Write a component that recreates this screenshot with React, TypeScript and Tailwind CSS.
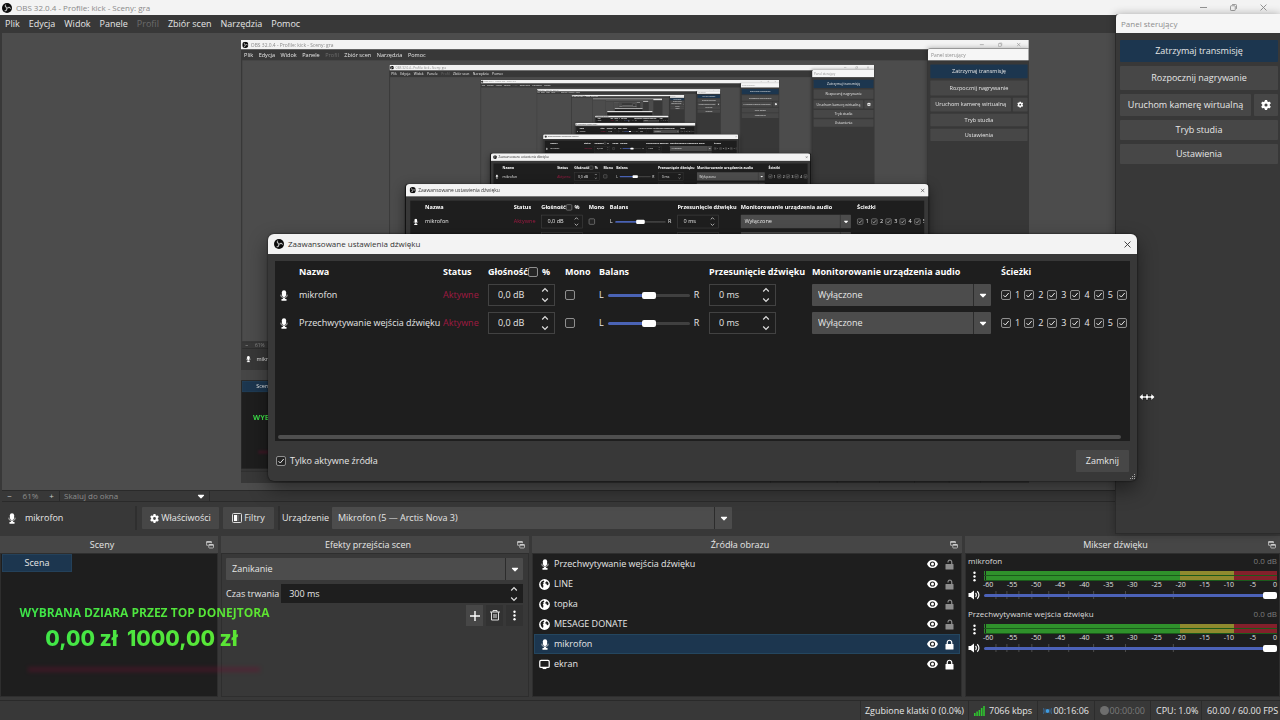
import type { ReactNode } from 'react';
import { FaCaretDown, FaGear } from 'react-icons/fa6';

// below this depth the captured window is too small to hold any text
const MAX_TEXT_DEPTH = 5;
const MAX_DEPTH = 9;

// the dialog grows while its edge is dragged, so older frames show it narrower
const dialogWidths = ['w-[869px]', 'w-[849px]', 'w-[843px]', 'w-[837px]', 'w-[837px]', 'w-[832px]'];

const menu = ['Plik', 'Edycja', 'Widok', 'Panele', 'Profil', 'Zbiór scen', 'Narzędzia', 'Pomoc'];

const sources = [
  { name: 'Przechwytywanie wejścia dźwięku', type: 'mic', locked: false, selected: false },
  { name: 'LINE', type: 'web', locked: false, selected: false },
  { name: 'topka', type: 'web', locked: false, selected: false },
  { name: 'MESAGE DONATE', type: 'web', locked: false, selected: false },
  { name: 'mikrofon', type: 'mic', locked: true, selected: true },
  { name: 'ekran', type: 'screen', locked: true, selected: false },
];

const audio = ['mikrofon', 'Przechwytywanie wejścia dźwięku'];
const scale = [-60, -55, -50, -45, -40, -35, -30, -25, -20, -15, -10, -5, 0];
const volumeTicks = [12, 23, 35, 48, 65, 85, 110, 142, 190];

/* ── ICONS ── */

function ObsLogo() {
  return (
    <svg viewBox="0 0 24 24" className="h-[10px] w-[10px] shrink-0" aria-hidden="true">
      <circle cx="12" cy="12" r="12" fill="#0b0b0b" />
      {[0, 120, 240].map((angle) => (
        <path key={angle} transform={`rotate(${angle} 12 12)`} d="M9 3.500c-2.600 1.800-2.600 5.600.3 7.100 1.500.8 3 .6 4-.2-1.900.1-3.600-.9-4.200-2.500C8.600 6.500 8.600 4.800 9 3.500z" fill="#d8d8d8" stroke="#d8d8d8" strokeWidth=".8" />
      ))}
    </svg>
  );
}

function MicIcon() {
  return (
    <svg viewBox="0 0 12 14" className="h-[11px] w-[10px] shrink-0" aria-hidden="true">
      <rect x="3.300" y="0.300" width="5.400" height="8.800" rx="2.700" fill="#fff" />
      <path d="M2 6c0 2.800 1.600 4.200 4 4.200S10 8.800 10 6" fill="none" stroke="#d0d0d0" strokeWidth="1.100" />
      <path d="M4.800 10h2.400v1.500h2v2.100H2.800v-2.100h2z" fill="#fff" />
    </svg>
  );
}

function GlobeIcon() {
  return (
    <svg viewBox="0 0 22 22" className="h-[11px] w-[11px] shrink-0" aria-hidden="true">
      <circle cx="11" cy="11" r="10.800" fill="#fff" />
      <path d="M3 8.500C4.500 5 7 3.500 10 3l.5 2.500L8 7.500l1.500 1.500-2 2.500 1.500 2-1 4.500C5 16.500 3 13 3 8.500z" fill="#1e1e1e" />
      <path d="M13 6.500l2.500-2c2 1 3.300 2.800 3.800 5l-1.300 3-2.500-.5-.5-2.500-2.500-.5z" fill="#1e1e1e" />
    </svg>
  );
}

function ScreenIcon() {
  return (
    <svg viewBox="0 0 14 14" className="h-[11px] w-[11px] shrink-0" aria-hidden="true">
      <rect x="1" y="1.800" width="12" height="9" rx="1.600" fill="none" stroke="#fff" strokeWidth="1.600" />
      <path d="M4.600 11h4.800v1.800H4.600z" fill="#fff" />
    </svg>
  );
}

function EyeIcon() {
  return (
    <svg viewBox="0 0 22 16" className="h-[8px] w-[11px]" aria-hidden="true">
      <path d="M11 0C5.800 0 1.600 3.300 0 8c1.600 4.700 5.800 8 11 8s9.400-3.300 11-8C20.400 3.300 16.200 0 11 0z" fill="#fff" />
      <circle cx="11" cy="8" r="5.200" fill="#1e1e1e" />
      <circle cx="11" cy="8" r="3" fill="#fff" />
    </svg>
  );
}

function LockIcon({ locked }: { locked: boolean }) {
  return (
    <svg viewBox="0 0 18 22" className="h-[11px] w-[9px]" aria-hidden="true">
      <rect x="1" y="10" width="16" height="11" rx="1" fill={locked ? '#fff' : '#8c8c8c'} />
      <path d={locked ? 'M4.500 11V7a4.500 4.500 0 0 1 9 0v4' : 'M13.500 11V5.500a3.800 3.800 0 0 0-7.500 0V7'} fill="none" stroke={locked ? '#fff' : '#8c8c8c'} strokeWidth="2.400" />
    </svg>
  );
}

function FloatIcon() {
  return (
    <svg viewBox="0 0 16 16" className="h-[8px] w-[8px]" aria-hidden="true">
      <path d="M4 8.500H1.200V1.500h9.500v3" fill="none" stroke="#ccc" strokeWidth="1.600" />
      <path d="M1 2h10" stroke="#ddd" strokeWidth="2.400" />
      <rect x="5.500" y="7" width="9.500" height="7" rx="1.400" fill="none" stroke="#ccc" strokeWidth="1.600" />
      <path d="M5.500 8h9.500" stroke="#ddd" strokeWidth="2.400" />
    </svg>
  );
}

function CloseIcon() {
  return (
    <svg viewBox="0 0 10 10" className="h-[7px] w-[7px]" aria-hidden="true">
      <path d="M.8.8l8.400 8.400M9.200.8L.8 9.200" stroke="currentColor" strokeWidth="1.300" />
    </svg>
  );
}

function DotsIcon() {
  return (
    <svg viewBox="0 0 4 14" className="h-[11px] w-[3px]" aria-hidden="true">
      <circle cx="2" cy="2" r="1.600" fill="#fff" />
      <circle cx="2" cy="7" r="1.600" fill="#fff" />
      <circle cx="2" cy="12" r="1.600" fill="#fff" />
    </svg>
  );
}

function SpeakerIcon() {
  return (
    <svg viewBox="0 0 24 20" className="h-[10px] w-[12px]" aria-hidden="true">
      <path d="M1 6h4.500L12 1v18l-6.500-5H1z" fill="#fff" />
      <path d="M15 6c2.200 2 2.200 6 0 8M18.500 2.500c4.500 4 4.500 11 0 15" fill="none" stroke="#fff" strokeWidth="2.400" />
    </svg>
  );
}

function SourceIcon({ type }: { type: string }) {
  if (type === 'web') return <GlobeIcon />;
  if (type === 'screen') return <ScreenIcon />;
  return <MicIcon />;
}

/* ── CONTROLS ── */

function Check({ checked, label, text }: { checked?: boolean; label: string; text?: ReactNode }) {
  return (
    <label className="flex items-center gap-1 whitespace-nowrap">
      <span className="relative block h-[10px] w-[10px] shrink-0">
        <input type="checkbox" defaultChecked={checked} aria-label={label} className="peer block h-[10px] w-[10px] appearance-none rounded-[2px] border border-[#8f8f8f] bg-[#252525]" />
        <svg viewBox="0 0 10 10" className="pointer-events-none absolute inset-0 hidden h-[10px] w-[10px] peer-checked:block" aria-hidden="true">
          <path d="M2.500 5.200l1.800 1.800 3.400-4" fill="none" stroke="#e8e8e8" strokeWidth="1" />
        </svg>
      </span>
      {text}
    </label>
  );
}

function Arrows() {
  return (
    <svg viewBox="0 0 8 16" className="h-[16px] w-[8px] shrink-0" aria-hidden="true">
      <path d="M1.200 4.500L4 1.700l2.800 2.800M1.200 11.500L4 14.300l2.800-2.800" fill="none" stroke="#e0e0e0" strokeWidth="1.200" />
    </svg>
  );
}

function Spin({ value, label }: { value: string; label: string }) {
  return (
    <div className="flex h-[22px] w-[67px] items-center border border-[#424242] pr-[5px] pl-[9px]">
      <input type="text" defaultValue={value} aria-label={label} className="w-full min-w-0 bg-transparent outline-none" />
      <Arrows />
    </div>
  );
}

function Select({ value, label }: { value: string; label: string }) {
  return (
    <div className="relative h-[22px] w-full min-w-0">
      <select aria-label={label} className="h-full w-full appearance-none rounded-[1px] bg-[#4c4c4c] px-[6px] outline-none">
        <option>{value}</option>
      </select>
      <span className="pointer-events-none absolute inset-y-0 right-0 flex w-[18px] items-center justify-center border-l border-[#2c2c2c]">
        <FaCaretDown className="h-[10px] w-[10px] text-white" />
      </span>
    </div>
  );
}

/* ── WINDOWS ── */

function ControlPanel() {
  const button = 'flex items-center justify-center rounded-[1px] bg-[#474747] hover:bg-[#555]';
  return (
    <aside className="absolute top-[14px] right-0 flex h-[520px] w-[165px] flex-col overflow-hidden rounded-tl-[4px] border-b border-l border-[#2b2b2b] bg-[#383838] shadow-[0_0_8px_rgba(0,0,0,.3)]">
      <h2 className="flex h-[19px] shrink-0 items-center bg-[#f6f6f6] px-[5px] text-[8px] text-[#8d8d8d]">Panel sterujący</h2>
      <div className="flex flex-col gap-[4px] py-[7px] pr-[2px] pl-[4px]">
        <button className="h-[22px] rounded-[1px] bg-[#1c364f]">Zatrzymaj transmisję</button>
        <button className={`${button} h-[24px]`}>Rozpocznij nagrywanie</button>
        <div className="flex gap-[3px]">
          <button className={`${button} h-[22px] flex-1`}>Uruchom kamerę wirtualną</button>
          <button className={`${button} h-[22px] w-[24px]`} aria-label="Konfiguracja kamery">
            <FaGear className="h-[10px] w-[10px] text-white" />
          </button>
        </div>
        <button className={`${button} h-[20px]`}>Tryb studia</button>
        <button className={`${button} h-[20px]`}>Ustawienia</button>
      </div>
    </aside>
  );
}

function AudioDialog({ depth }: { depth: number }) {
  return (
    <section role="dialog" aria-label="Zaawansowane ustawienia dźwięku" className={`absolute top-[234px] left-[268px] flex h-[247px] flex-col overflow-hidden rounded-[6px] bg-[#383838] shadow-[0_8px_20px_rgba(0,0,0,.45),0_0_2px_rgba(0,0,0,.8)] ${dialogWidths[depth]}`}>
      <header className="flex h-[20px] shrink-0 items-center gap-[4px] bg-[#f3f3f3] pr-[6px] pl-[6px] text-[8px] text-[#333]">
        <ObsLogo />
        <span className="flex-1">Zaawansowane ustawienia dźwięku</span>
        <button aria-label="Zamknij okno"><CloseIcon /></button>
      </header>

      <div className="mx-[7px] mt-[7px] flex h-[180px] flex-col overflow-hidden bg-[#1e1e1e]">
        <table className="w-[875px] table-fixed text-left">
          <colgroup>
            <col className="w-[24px]" />
            <col className="w-[144px]" />
            <col className="w-[45px]" />
            <col className="w-[77px]" />
            <col className="w-[34px]" />
            <col className="w-[110px]" />
            <col className="w-[103px]" />
            <col className="w-[189px]" />
            <col />
          </colgroup>
          <thead>
            <tr className="h-[20px] whitespace-nowrap text-white *:pt-[2px]">
              <th />
              <th>Nazwa</th>
              <th>Status</th>
              <th>
                <div className="flex items-center">
                  Głośność
                  <Check label="Głośność w procentach" text="%" />
                </div>
              </th>
              <th>Mono</th>
              <th>Balans</th>
              <th>Przesunięcie dźwięku</th>
              <th>Monitorowanie urządzenia audio</th>
              <th>Ścieżki</th>
            </tr>
          </thead>
          <tbody>
            {audio.map((name) => (
              <tr key={name} className="h-[28px] whitespace-nowrap">
                <td className="pl-[4px]"><MicIcon /></td>
                <td>{name}</td>
                <td className="text-[#a01a42]">Aktywne</td>
                <td><Spin value="0,0 dB" label={`Głośność: ${name}`} /></td>
                <td><Check label={`Mono: ${name}`} /></td>
                <td>
                  <label className="flex items-center gap-[4px]">
                    L
                    <input
                      type="range"
                      defaultValue={50}
                      aria-label={`Balans: ${name}`}
                      className="h-[3px] w-[82px] appearance-none rounded-full bg-[linear-gradient(90deg,#4a63b5_50%,#404040_50%)] [&::-webkit-slider-thumb]:h-[7px] [&::-webkit-slider-thumb]:w-[14px] [&::-webkit-slider-thumb]:appearance-none [&::-webkit-slider-thumb]:rounded-[2px] [&::-webkit-slider-thumb]:bg-white"
                    />
                    R
                  </label>
                </td>
                <td><Spin value="0 ms" label={`Przesunięcie: ${name}`} /></td>
                <td className="pr-[10px]"><Select value="Wyłączone" label={`Monitorowanie: ${name}`} /></td>
                <td>
                  <div className="flex gap-[4px]">
                    {[1, 2, 3, 4, 5].map((n) => (
                      <Check key={n} checked label={`Ścieżka ${n}: ${name}`} text={n} />
                    ))}
                    <Check checked label={`Ścieżka 6: ${name}`} />
                  </div>
                </td>
              </tr>
            ))}
          </tbody>
        </table>
        <div className="mt-auto mr-[9px] mb-[2px] ml-[3px] h-[4px] shrink-0 rounded-full bg-[#4f4f4f]" />
      </div>

      <footer className="flex flex-1 items-center justify-between pr-[8px] pl-[8px]">
        <Check checked label="Tylko aktywne źródła" text="Tylko aktywne źródła" />
        <button className="h-[22px] w-[53px] rounded-[1px] bg-[#474747]">Zamknij</button>
      </footer>
      <svg viewBox="0 0 6 6" className="absolute right-[1px] bottom-[1px] h-[6px] w-[6px]" aria-hidden="true">
        <path d="M4 0h1v1H4zM2 2h1v1H2zM4 2h1v1H4zM0 4h1v1H0zM2 4h1v1H2zM4 4h1v1H4z" fill="#aaa" />
      </svg>
    </section>
  );
}

/* ── DOCKS ── */

function Dock({ title, className = '', children }: { title: string; className?: string; children: ReactNode }) {
  return (
    <section className="flex min-w-0 flex-col">
      <header className="flex h-[17px] shrink-0 items-center bg-[#464646] px-[4px]">
        <h2 className="flex-1 pr-[6px] text-center">{title}</h2>
        <button aria-label={`Odepnij: ${title}`}><FloatIcon /></button>
      </header>
      <div className={`flex-1 border border-[#2e2e2e] ${className}`}>{children}</div>
    </section>
  );
}

function Meter({ name }: { name: string }) {
  return (
    <div className="h-[53px] px-[2px]">
      <div className="flex h-[13px] items-center justify-between text-[8px]">
        <span className="text-[#dcdcdc]">{name}</span>
        <span className="text-[#7c7c7c]">0.0 dB</span>
      </div>
      <div className="grid grid-cols-[12px_1fr] gap-x-[4px]">
        <button className="flex h-[18px] items-center justify-center" aria-label={`Opcje: ${name}`}><DotsIcon /></button>
        <div className="pt-[4px]">
          {[0, 1].map((channel) => (
            <div key={channel} className="flex h-[5px] border-b border-[#1b5a1b]">
              <span className="w-[1px] bg-[#2f8a2f]" />
              <span className="ml-[1px] grow-[194] bg-[#2f912b]" />
              <span className="grow-[54] bg-[#8f8a2e]" />
              <span className="grow-[43] bg-[#83202b]" />
            </div>
          ))}
          <div className="flex justify-between text-[7px] leading-[8px] text-[#e0e0e0]">
            {scale.map((n) => (
              <span key={n} className="flex w-[8px] justify-center last:w-[4px]">{n}</span>
            ))}
          </div>
        </div>
        <span className="flex h-[12px] items-center"><SpeakerIcon /></span>
        <div className="relative flex h-[12px] items-center">
          <svg viewBox="0 0 294 12" preserveAspectRatio="none" className="absolute inset-0 h-full w-full" aria-hidden="true">
            {volumeTicks.map((x) => (
              <path key={x} d={`M${x} 2v8`} stroke="#4d4d4d" />
            ))}
          </svg>
          <input
            type="range"
            defaultValue={100}
            aria-label={`Głośność: ${name}`}
            className="relative h-[3px] w-full appearance-none rounded-full bg-[#4c62b8] [&::-webkit-slider-thumb]:h-[7px] [&::-webkit-slider-thumb]:w-[14px] [&::-webkit-slider-thumb]:appearance-none [&::-webkit-slider-thumb]:rounded-[2px] [&::-webkit-slider-thumb]:bg-white"
          />
        </div>
      </div>
    </div>
  );
}

function Docks() {
  return (
    <div className="relative grid h-[161px] shrink-0 grid-cols-[218fr_308fr_430fr_315fr] gap-[3px]">
      <Dock title="Sceny" className="bg-[#1e1e1e] px-[1px]">
        <button className="h-[18px] w-[70px] border border-[#24415a] bg-[#1c364f]">Scena</button>
      </Dock>

      <Dock title="Efekty przejścia scen" className="bg-[#383838] pt-[4px] pr-[5px] pl-[4px]">
        <Select value="Zanikanie" label="Efekt przejścia" />
        <label className="mt-[4px] flex items-center gap-[2px] whitespace-nowrap">
          Czas trwania
          <span className="flex h-[19px] flex-1 items-center bg-[#1e1e1e] pr-[5px] pl-[8px]">
            <input type="text" defaultValue="300 ms" className="w-full min-w-0 bg-transparent outline-none" />
            <Arrows />
          </span>
        </label>
        <div className="mt-[2px] flex justify-end gap-[3px]">
          <button className="flex h-[21px] w-[17px] items-center justify-center bg-[#474747]" aria-label="Dodaj">
            <svg viewBox="0 0 10 10" className="h-[10px] w-[10px]"><path d="M5 0v10M0 5h10" stroke="#fff" strokeWidth="1.400" /></svg>
          </button>
          <button className="flex h-[21px] w-[17px] items-center justify-center bg-[#323232]" aria-label="Usuń">
            <svg viewBox="0 0 20 22" className="h-[11px] w-[10px]" fill="none" stroke="#ddd" strokeWidth="2">
              <path d="M0 4h20M6 4V1h8v3M3 4v16h14V4M8 8v8M12 8v8" />
            </svg>
          </button>
          <button className="flex h-[21px] w-[17px] items-center justify-center bg-[#323232]" aria-label="Więcej"><DotsIcon /></button>
        </div>
      </Dock>

      <Dock title="Źródła obrazu" className="bg-[#1e1e1e] px-[1px]">
        <ul>
          {sources.map((s) => (
            <li key={s.name} className={`flex h-[20px] items-center gap-[4px] border pr-[5px] pl-[4px] ${s.selected ? 'border-[#24465f] bg-[#1c364f]' : 'border-transparent'}`}>
              <span className="flex w-[11px] shrink-0 justify-center"><SourceIcon type={s.type} /></span>
              <span className="flex-1">{s.name}</span>
              <button aria-label={`Widoczność: ${s.name}`}><EyeIcon /></button>
              <button className="ml-[3px]" aria-label={`Blokada: ${s.name}`}><LockIcon locked={s.locked} /></button>
            </li>
          ))}
        </ul>
      </Dock>

      <Dock title="Mikser dźwięku" className="bg-[#1e1e1e]">
        {audio.map((name) => <Meter key={name} name={name} />)}
      </Dock>

      {/* Donation goal */}
      <div className="pointer-events-none absolute top-[68px] left-[16px] flex w-[257px] flex-col items-center whitespace-nowrap bg-linear-to-r from-[#3be64a] to-[#5fe62f] bg-clip-text text-transparent">
        <p className="text-[12px] leading-[18px] font-bold">WYBRANA DZIARA PRZEZ TOP DONEJTORA</p>
        <p className="pr-[6px] font-[Inter] text-[21px] leading-[34px] font-extrabold whitespace-pre">0,00 zł  1000,00 zł</p>
      </div>
      <div className="pointer-events-none absolute top-[131px] left-[28px] h-[5px] w-[232px] bg-[#6b1030] opacity-40 blur-[2px]" />
    </div>
  );
}

function StatusBar() {
  const cell = 'flex items-center justify-between border-l border-[#2c2c2c] px-[5px]';
  return (
    <footer className="mt-[3px] flex h-[20px] shrink-0 justify-end border-t border-[#2a2a2a] whitespace-nowrap">
      <span className="flex items-center border-l border-[#2c2c2c] px-[4px]">Zgubione klatki 0 (0.0%)</span>
      <span className={`${cell} w-[69px]`}>
        <svg viewBox="0 0 11 10" className="h-[10px] w-[11px]" aria-hidden="true">
          <path d="M0 7h1.600v3H0zM2.300 5.500h1.600V10H2.300zM4.600 4h1.600v6H4.600zM6.900 2h1.600v8H6.900zM9.200 0h1.600v10H9.200z" fill="#2fc42f" />
        </svg>
        7066 kbps
      </span>
      <span className={`${cell} w-[57px]`}>
        <svg viewBox="0 0 12 10" className="h-[8px] w-[9px] shrink-0" fill="none" stroke="#3a6f9f" aria-hidden="true">
          <circle cx="6" cy="5" r="2.600" fill="#3f9be0" stroke="none" />
          <path d="M3 2Q1.500 5 3 8M9 2q1.500 3 0 6M1 1Q-1 5 1 9M11 1q2 4 0 8" />
        </svg>
        00:16:06
      </span>
      <span className={`${cell} w-[56px] text-[#7a7a7a]`}>
        <span className="h-[9px] w-[9px] shrink-0 rounded-full bg-[#6e6e6e]" />
        00:00:00
      </span>
      <span className={`${cell} w-[51px]`}>CPU: 1.0%</span>
      <span className={`${cell} w-[79px]`}>60.00 / 60.00 FPS</span>
    </footer>
  );
}

/* ── MAIN WINDOW ── */

function Preview({ depth }: { depth: number }) {
  return (
    <main className="ml-[2px] flex min-h-0 flex-1 items-center justify-center bg-[#4c4c4c] pr-[13px]">
      <div className="h-[443px] w-[788px] shrink-0 overflow-hidden bg-[#383838]" aria-hidden="true" inert>
        {depth < MAX_DEPTH && (
          <div className="h-[720px] w-[1280px] origin-top-left scale-[0.6155]">
            {depth < MAX_TEXT_DEPTH ? <Desktop depth={depth + 1} /> : <Thumbnail depth={depth + 1} />}
          </div>
        )}
      </div>
    </main>
  );
}

function Thumbnail({ depth }: { depth: number }) {
  return (
    <div className="relative flex h-full w-full flex-col overflow-hidden bg-[#383838]">
      <div className="h-[15px] shrink-0 bg-[#f3f3f3]" />
      <div className="h-[18px] shrink-0" />
      <Preview depth={depth} />
      <div className="h-[230px] shrink-0 bg-[#262626]" />
      <div className="absolute top-[14px] right-0 h-[520px] w-[165px] border-t-[19px] border-[#f6f6f6] bg-[#383838]" />
      <div className="absolute top-[234px] left-[268px] h-[247px] w-[830px] border-t-[20px] border-[#f3f3f3] bg-[#1e1e1e]" />
    </div>
  );
}

function Desktop({ depth }: { depth: number }) {
  return (
    <div className="relative flex h-full w-full flex-col overflow-hidden bg-[#383838] font-['Open_Sans','Noto_Sans',sans-serif] text-[9px] leading-[12px] text-[#e6e6e6]">
      <header className="flex h-[15px] shrink-0 items-center gap-[4px] bg-[#f3f3f3] pr-[13px] pl-[2px] text-[8px] text-[#8a8a8a]">
        <ObsLogo />
        <span className="flex-1">OBS 32.0.4 - Profile: kick - Sceny: gra</span>
        <div className="flex items-center gap-[23px] text-[#8a8a8a]">
          <button aria-label="Minimalizuj">
            <svg viewBox="0 0 10 10" className="h-[7px] w-[7px]"><path d="M0 5h10" stroke="currentColor" strokeWidth="1.300" /></svg>
          </button>
          <button aria-label="Przywróć">
            <svg viewBox="0 0 10 10" className="h-[7px] w-[7px]" fill="none" stroke="currentColor" strokeWidth="1.200">
              <rect x=".7" y="2.500" width="6.800" height="6.800" rx="1" />
              <path d="M3 .7h5a1.300 1.300 0 0 1 1.300 1.300v5" />
            </svg>
          </button>
          <button aria-label="Zamknij program"><CloseIcon /></button>
        </div>
      </header>

      <nav className="flex h-[18px] shrink-0 items-center gap-[9px] pl-[5px]">
        {menu.map((item) => (
          <button key={item} disabled={item === 'Profil'} className="disabled:text-[#6c6c6c]">{item}</button>
        ))}
      </nav>

      <Preview depth={depth} />

      <div className="ml-[2px] flex h-[12px] shrink-0 items-center border-y border-[#2a2a2a] text-[8px] text-[#8e8e8e]">
        <button className="w-[15px] text-[#ccc]" aria-label="Pomniejsz">−</button>
        <span className="w-[27px] text-center">61%</span>
        <button className="w-[15px] text-[#ccc]" aria-label="Powiększ">+</button>
        <label className="relative flex h-full w-[151px] items-center border-x border-[#2a2a2a]">
          <select aria-label="Skala podglądu" className="w-full appearance-none pl-[4px] leading-[10px] outline-none">
            <option>Skaluj do okna</option>
          </select>
          <FaCaretDown className="pointer-events-none absolute right-[3px] h-[10px] w-[10px] text-white" />
        </label>
      </div>

      {/* Selected source toolbar */}
      <div className="mb-[2px] flex h-[32px] shrink-0 items-center pl-[7px]">
        <MicIcon />
        <span className="ml-[8px] w-[110px]">mikrofon</span>
        <span className="mr-[5px] h-[24px] w-[2px] bg-[#2f2f2f]" />
        <button className="flex h-[22px] w-[77px] items-center justify-center gap-[2px] rounded-[1px] bg-[#474747]">
          <FaGear className="h-[9px] w-[9px] text-white" />
          Właściwości
        </button>
        <button className="ml-[4px] flex h-[22px] w-[51px] items-center justify-center gap-[2px] rounded-[1px] bg-[#474747]">
          <svg viewBox="0 0 20 20" className="h-[10px] w-[10px]" aria-hidden="true">
            <rect x="1" y="1" width="18" height="18" rx="2" fill="none" stroke="#ddd" strokeWidth="2" />
            <path d="M4 4h6v12H4z" fill="#fff" />
            <path d="M11 4h2v12h-2z" fill="#888" />
          </svg>
          Filtry
        </button>
        <span className="mr-[2px] ml-[4px] h-[24px] w-[2px] bg-[#2f2f2f]" />
        <span className="w-[50px]">Urządzenie</span>
        <div className="w-[400px]"><Select value="Mikrofon (5 — Arctis Nova 3)" label="Urządzenie" /></div>
      </div>

      <Docks />
      <StatusBar />
      <ControlPanel />
      <AudioDialog depth={depth} />
    </div>
  );
}

export default function App() {
  return (
    <div className="relative h-screen min-h-[600px] w-full overflow-hidden">
      <Desktop depth={0} />
      <svg viewBox="0 0 16 8" className="pointer-events-none absolute top-[393px] left-[1139px] h-[8px] w-[16px]" aria-hidden="true">
        <path d="M0 4l4-3.500v2.500h3V1h2v2h3V.5L16 4l-4 3.500V5H9v2H7V5H4v2.500z" fill="#fff" stroke="#111" strokeWidth=".6" />
      </svg>
    </div>
  );
}
